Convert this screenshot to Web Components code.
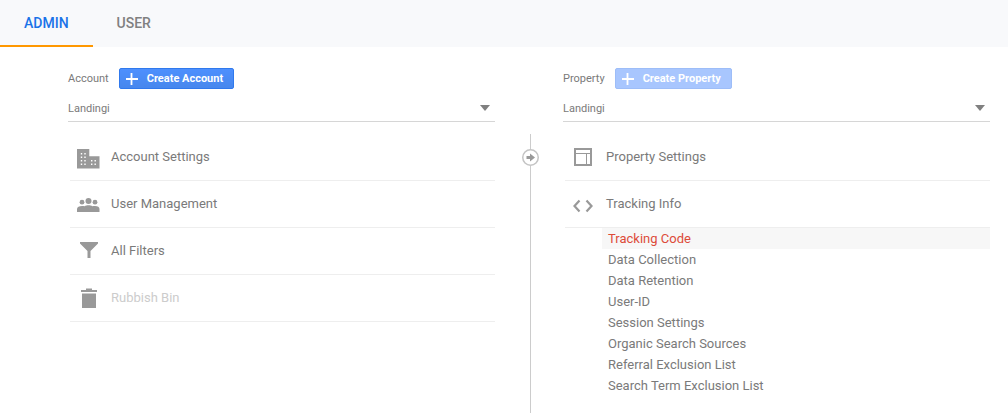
<!DOCTYPE html>
<html lang="en">
<head>
<meta charset="utf-8">
<title>Admin</title>
<style>
  body {
    margin: 0;
    background: #fff;
    color: #7a7a7a;
    font-family: Roboto, "Liberation Sans", sans-serif;
    font-size: 13px;
  }
</style>
</head>
<body>
<admin-page>
  <admin-tab slot="tabs" active>ADMIN</admin-tab>
  <admin-tab slot="tabs">USER</admin-tab>

  <entity-column slot="account" label="Account" entity="Landingi">
    <create-button slot="action">Create Account</create-button>
    <nav-item icon="building">Account Settings</nav-item>
    <nav-item icon="people">User Management</nav-item>
    <nav-item icon="filter">All Filters</nav-item>
    <nav-item icon="bin" muted>Rubbish Bin</nav-item>
  </entity-column>

  <entity-column slot="property" label="Property" entity="Landingi">
    <create-button slot="action" disabled>Create Property</create-button>
    <nav-item icon="layout">Property Settings</nav-item>
    <nav-item icon="code">Tracking Info</nav-item>
    <sub-item active>Tracking Code</sub-item>
    <sub-item>Data Collection</sub-item>
    <sub-item>Data Retention</sub-item>
    <sub-item>User-ID</sub-item>
    <sub-item>Session Settings</sub-item>
    <sub-item>Organic Search Sources</sub-item>
    <sub-item>Referral Exclusion List</sub-item>
    <sub-item>Search Term Exclusion List</sub-item>
  </entity-column>
</admin-page>

<script>
const ICONS = {
  building: `
    <path d="M1 4h12.300v7.300H23.500V23.500H1z"/>
    <path fill="none" stroke="#fff" stroke-width="1.400" stroke-dasharray="1.500 2" d="M5.500 8v12M9 8v12M15.700 15v5M19.200 15v5"/>`,
  people: `
    <circle cx="6" cy="10.200" r="2.400"/><circle cx="12.500" cy="9" r="3"/><circle cx="19" cy="10.200" r="2.400"/>
    <path d="M1 20v-3c0-1.800 2.200-3 5-3 1 0 1.900.1 2.600.3 1-.7 2.400-1 3.900-1s2.900.3 3.900 1c.7-.2 1.600-.3 2.600-.3 2.800 0 4.500 1.200 4.500 3v3z"/>`,
  filter: '<path d="M4 3h18v1.500L14.500 12v7h-3v-7L4 4.500z"/>',
  bin: '<path d="M5 4h5V2.500h6V4h5v2H5zM6 7.500h14V22H6z"/>',
  layout: `
    <path fill="none" stroke="currentColor" stroke-width="2" d="M4 4h16v16H4z"/>
    <path fill="none" stroke="currentColor" d="M5 8.500h14M15.500 9v10"/>`,
  code: '<path fill="none" stroke="currentColor" stroke-width="2.200" d="M8.500 8.500L3.500 14l5 5.500M15.500 8.500l5 5.500-5 5.500"/>'
};

class AdminPage extends HTMLElement {
  constructor() {
    super();

    this.attachShadow({ mode: 'open' });

    this.shadowRoot.innerHTML = `
      <style>
        :host {
          display: flex;
          flex-direction: column;
          min-height: 100vh;
        }

        nav {
          display: flex;
          background: #f8f9fb;
        }

        main {
          flex: 1;
          display: grid;
          grid-template-columns: 1fr 68px 1fr;
          padding: 21px 18px 0 68px;
        }

        .divider {
          display: flex;
          flex-direction: column;
          align-items: center;
          margin-top: 66px;
          padding-left: 2px;
        }

        .divider::before,
        .divider::after {
          content: "";
          width: 1px;
          background: #ccc;
        }

        .divider::before {
          height: 15px;
        }

        .divider::after {
          flex: 1;
        }

        svg {
          display: block;
        }
      </style>

      <nav><slot name="tabs"></slot></nav>
      <main>
        <slot name="account"></slot>
        <div class="divider">
          <svg width="17" height="17" viewBox="0 0 17 17">
            <circle cx="8.500" cy="8.500" r="7.750" fill="#fff" stroke="#c4c4c4" stroke-width="1.500"/>
            <path fill="#999" d="M4.500 7H8V4.500l5 4-5 4V10H4.500z"/>
          </svg>
        </div>
        <slot name="property"></slot>
      </main>
    `;
  }
}

class AdminTab extends HTMLElement {
  constructor() {
    super();

    this.attachShadow({ mode: 'open' });

    this.shadowRoot.innerHTML = `
      <style>
        :host {
          display: block;
        }

        a {
          display: block;
          padding: 2px 24px 0;
          border-bottom: 2px solid transparent;
          color: #808080;
          font-size: 14px;
          font-weight: 500;
          line-height: 43px;
          text-decoration: none;
        }

        :host([active]) a {
          border-color: #ff9800;
          color: #1a73e8;
        }
      </style>

      <a href="#"><slot></slot></a>
    `;
  }
}

class CreateButton extends HTMLElement {
  constructor() {
    super();

    this.attachShadow({ mode: 'open' });

    this.shadowRoot.innerHTML = `
      <style>
        :host {
          display: block;
        }

        button {
          display: flex;
          align-items: center;
          gap: 9px;
          height: 21px;
          padding: 0 10px 0 5px;
          border: 1px solid #3079ed;
          border-radius: 2px;
          background: linear-gradient(#4d90fe, #4787ed);
          color: #fff;
          font: bold 11px Roboto, "Liberation Sans", sans-serif;
        }

        button:disabled {
          border-color: #9dbdf8;
          background: #a8c6fe;
        }
      </style>

      <button type="button">
        <svg width="13" height="13" viewBox="0 0 13 13">
          <path fill="none" stroke="#fff" stroke-width="1.800" d="M6.500 1v12M1 7h12"/>
        </svg>
        <slot></slot>
      </button>
    `;
  }

  connectedCallback() {
    this.shadowRoot.querySelector('button').disabled = this.hasAttribute('disabled');
  }
}

class EntityColumn extends HTMLElement {
  constructor() {
    super();

    this.attachShadow({ mode: 'open' });

    this.shadowRoot.innerHTML = `
      <style>
        :host {
          display: block;
          min-width: 0;
        }

        .head {
          display: flex;
          align-items: center;
          gap: 10px;
          font-size: 11px;
        }

        .picker {
          display: grid;
          grid-template-columns: 1fr 10px;
          align-items: center;
          margin: 6px 0 12px;
          padding-right: 5px;
          border-bottom: 1px solid #d6d6d6;
        }

        select {
          grid-area: 1 / 1 / 2 / 3;
          height: 26px;
          padding: 0;
          border: 0;
          appearance: none;
          background: none;
          color: inherit;
          font: 11px Roboto, "Liberation Sans", sans-serif;
        }

        .arrow {
          grid-area: 1 / 2;
          border: 5px solid transparent;
          border-top: 6px solid #808080;
          border-bottom: 0;
          pointer-events: none;
        }

        .items {
          padding-left: 2px;
        }
      </style>

      <div class="head">
        <label for="entity"></label>
        <slot name="action"></slot>
      </div>
      <div class="picker">
        <select id="entity"><option></option></select>
        <span class="arrow"></span>
      </div>
      <div class="items"><slot></slot></div>
    `;
  }

  connectedCallback() {
    this.shadowRoot.querySelector('label').textContent = this.getAttribute('label');
    this.shadowRoot.querySelector('option').textContent = this.getAttribute('entity');
  }
}

class NavItem extends HTMLElement {
  constructor() {
    super();

    this.attachShadow({ mode: 'open' });

    this.shadowRoot.innerHTML = `
      <style>
        :host {
          display: block;
          border-bottom: 1px solid #eee;
        }

        a {
          display: flex;
          align-items: center;
          gap: 11px;
          height: 44px;
          padding: 0 0 2px 6px;
          color: inherit;
          text-decoration: none;
        }

        svg {
          margin-top: 2px;
          color: #999;
          fill: currentColor;
        }

        :host([muted]) a {
          color: #ccc;
        }
      </style>

      <a href="#">
        <svg width="24" height="24" viewBox="0 0 24 24"></svg>
        <slot></slot>
      </a>
    `;
  }

  connectedCallback() {
    this.shadowRoot.querySelector('svg').innerHTML = ICONS[this.getAttribute('icon')];
  }
}

class SubItem extends HTMLElement {
  constructor() {
    super();

    this.attachShadow({ mode: 'open' });

    this.shadowRoot.innerHTML = `
      <style>
        :host {
          display: block;
          margin-left: 37px;
        }

        a {
          display: block;
          padding-left: 6px;
          color: inherit;
          line-height: 21px;
          text-decoration: none;
        }

        :host([active]) a {
          background: #f7f7f7;
          color: #dd4b39;
        }
      </style>

      <a href="#"><slot></slot></a>
    `;
  }
}

customElements.define('admin-page', AdminPage);
customElements.define('admin-tab', AdminTab);
customElements.define('create-button', CreateButton);
customElements.define('entity-column', EntityColumn);
customElements.define('nav-item', NavItem);
customElements.define('sub-item', SubItem);
</script>
</body>
</html>
